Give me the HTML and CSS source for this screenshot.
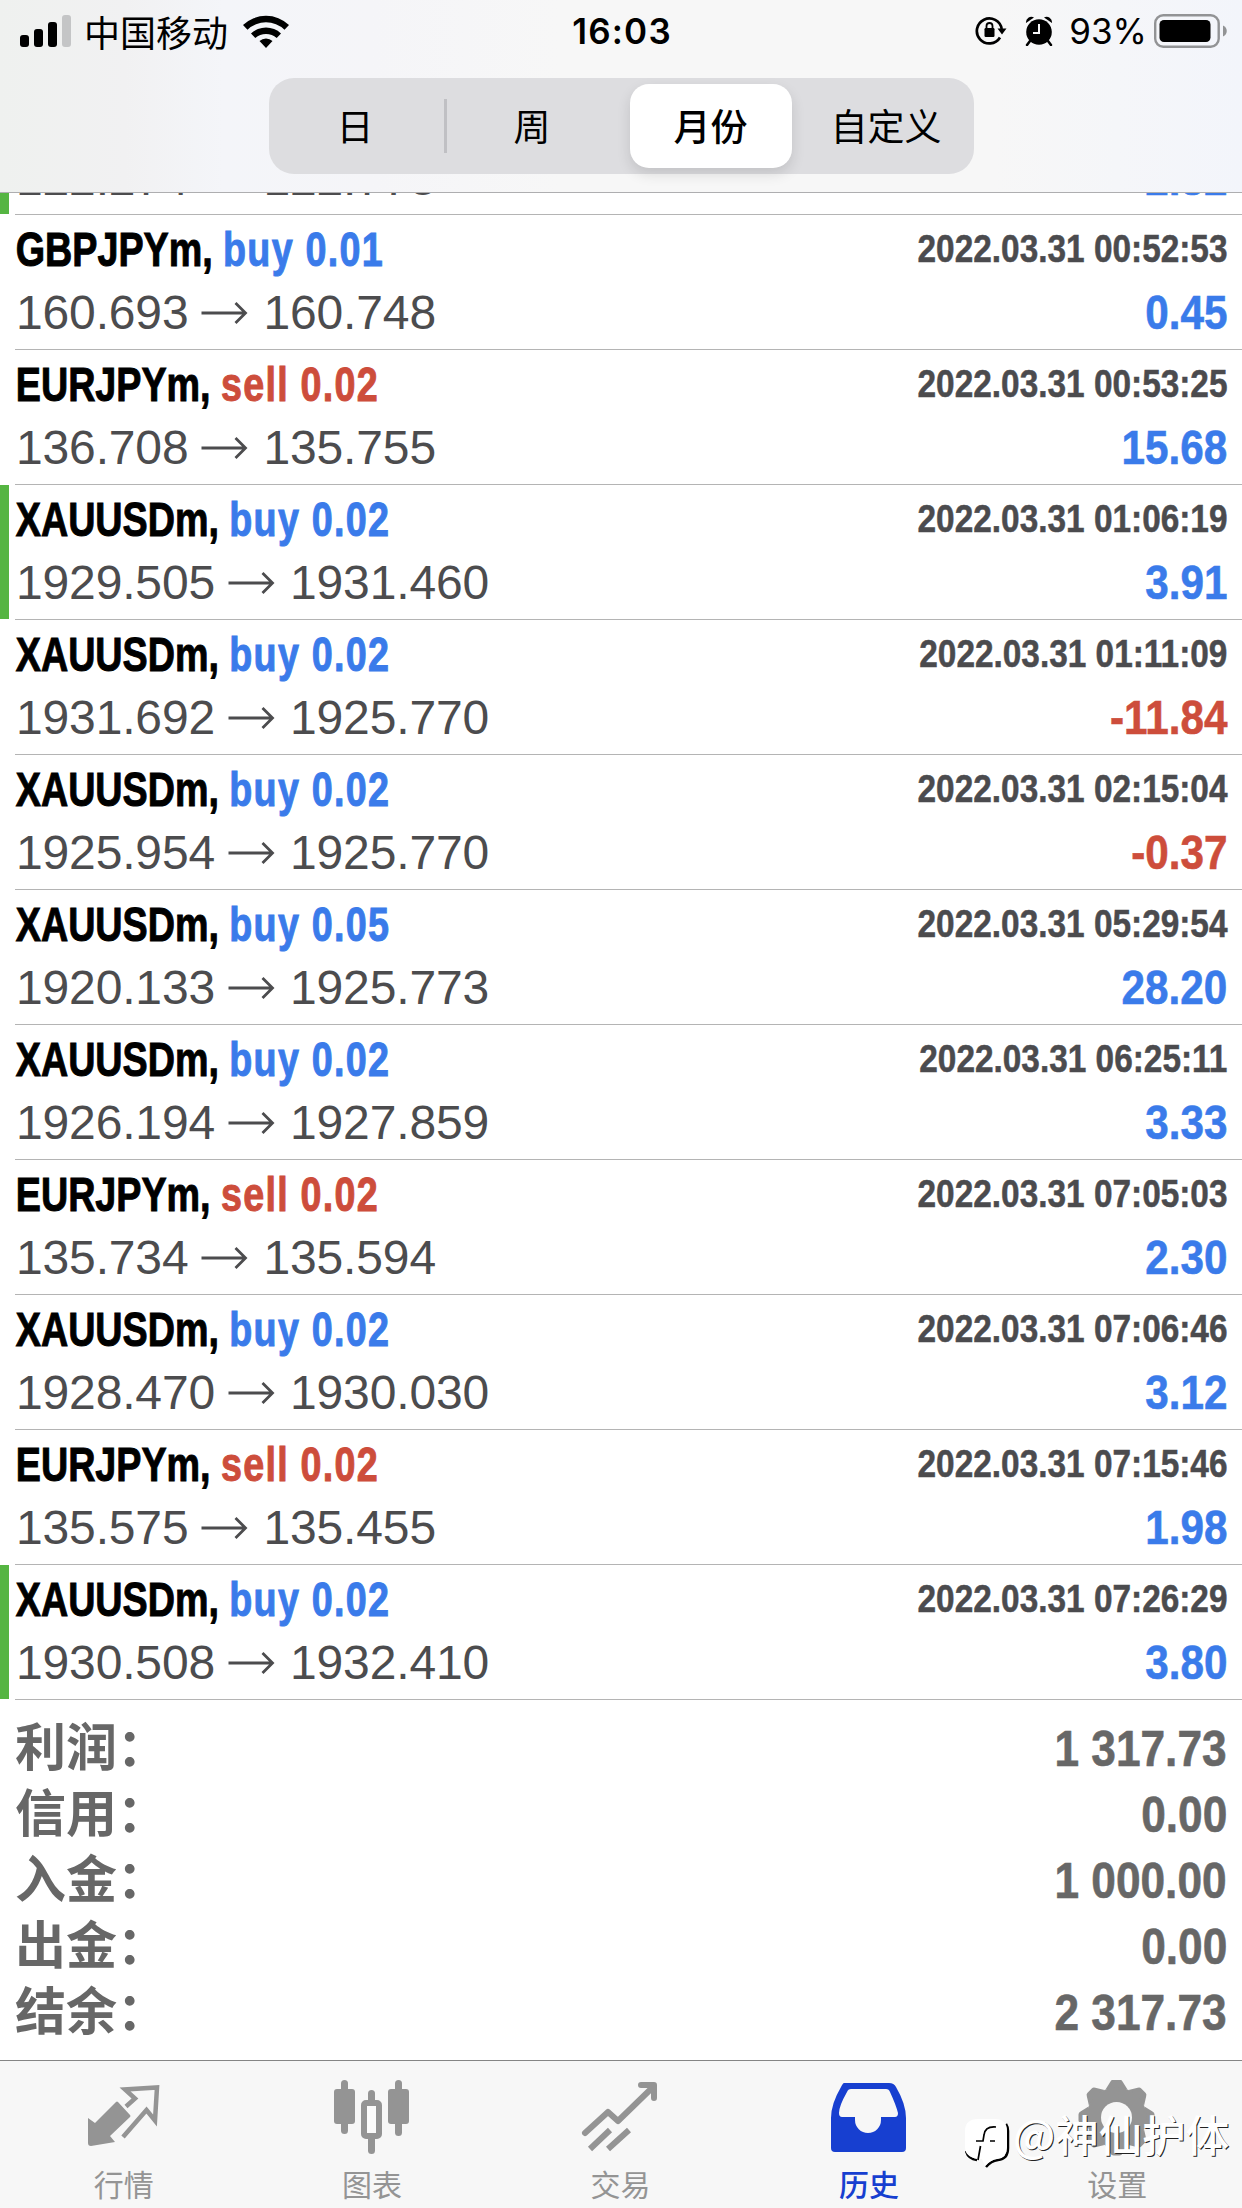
FILE: index.html
```
<!DOCTYPE html>
<html lang="zh-CN">
<head>
<meta charset="utf-8">
<title>历史</title>
<link rel="stylesheet" href="styles.css">
</head>
<body>
<div class="app">
  <header class="header">
    <div class="status">
      <div class="status-left">
        <svg class="signal" width="52" height="32" viewBox="0 0 52 32"><rect x="0" y="20" width="9" height="12" rx="3"/><rect x="14" y="14" width="9" height="18" rx="3"/><rect x="28" y="7" width="9" height="25" rx="3"/><rect x="42" y="0" width="9" height="32" rx="3" fill="#c4c5c6"/></svg>
        <span class="carrier">中国移动</span>
        <svg class="wifi" width="46" height="33" viewBox="0 0 46 33"><path d="M23 33l-6.500-7a9.500 9.500 0 0 1 13 0zM8 18.500a22 22 0 0 1 30 0l-4.300 4.500a16 16 0 0 0-21.400 0zM0 10a33.500 33.500 0 0 1 46 0l-4.500 4.700a27 27 0 0 0-37 0z"/></svg>
      </div>
      <div class="clock">16:03</div>
      <div class="status-right">
        <svg class="lock" width="32" height="30" viewBox="0 0 32 30"><path d="M25 21.500A12.500 12.500 0 1 1 26.700 13" fill="none" stroke="#000" stroke-width="2.700"/><path d="M22.500 12.500h9l-4.500 6z"/><rect x="9.500" y="12" width="10" height="9" rx="1.200"/><path d="M11.500 13v-3a3 3 0 0 1 6 0v3" fill="none" stroke="#000" stroke-width="1.800"/></svg>
        <svg class="alarm" width="28" height="30" viewBox="0 0 28 30"><circle cx="14" cy="16" r="12.800"/><path d="M1 7a5.500 5.500 0 0 1 8-5.500zM27 7a5.500 5.500 0 0 0-8-5.500z"/><path d="M5 25l-3 4M23 25l3 4" stroke="#000" stroke-width="2.500" stroke-linecap="round"/><path d="M14 8v9H8" fill="none" stroke="#f7f7f8" stroke-width="2"/></svg>
        <span class="percent">93%</span>
        <svg class="battery" width="73" height="34" viewBox="0 0 73 34"><rect x="1.200" y="1.200" width="63.500" height="31.600" rx="8" fill="none" stroke="#929395" stroke-width="2.400"/><rect x="5.500" y="6" width="51" height="22" rx="4.500"/><path d="M69 11.500c5 2 5 9 0 11z" fill="#929395"/></svg>
      </div>
    </div>
    <nav class="segments">
      <span class="segment">日</span>
      <span class="segment divided">周</span>
      <span class="segment selected">月份</span>
      <span class="segment">自定义</span>
    </nav>
  </header>

  <main class="history">
    <article class="deal marked clipped"><div class="line price"><span>122.274</span><svg class="arrow" viewBox="0 0 46 22"><path d="M0 11h44M34 1l10 10-10 10"/></svg><span>122.773</span><b class="profit">2.82</b></div></article>
    <article class="deal"><div class="line"><h2 class="title">GBPJPYm, <em class="buy">buy 0.01</em></h2><time>2022.03.31 00:52:53</time></div><div class="line price"><span>160.693</span><svg class="arrow" viewBox="0 0 46 22"><path d="M0 11h44M34 1l10 10-10 10"/></svg><span>160.748</span><b class="profit">0.45</b></div></article>
    <article class="deal"><div class="line"><h2 class="title">EURJPYm, <em class="sell">sell 0.02</em></h2><time>2022.03.31 00:53:25</time></div><div class="line price"><span>136.708</span><svg class="arrow" viewBox="0 0 46 22"><path d="M0 11h44M34 1l10 10-10 10"/></svg><span>135.755</span><b class="profit">15.68</b></div></article>
    <article class="deal marked"><div class="line"><h2 class="title">XAUUSDm, <em class="buy">buy 0.02</em></h2><time>2022.03.31 01:06:19</time></div><div class="line price"><span>1929.505</span><svg class="arrow" viewBox="0 0 46 22"><path d="M0 11h44M34 1l10 10-10 10"/></svg><span>1931.460</span><b class="profit">3.91</b></div></article>
    <article class="deal"><div class="line"><h2 class="title">XAUUSDm, <em class="buy">buy 0.02</em></h2><time>2022.03.31 01:11:09</time></div><div class="line price"><span>1931.692</span><svg class="arrow" viewBox="0 0 46 22"><path d="M0 11h44M34 1l10 10-10 10"/></svg><span>1925.770</span><b class="profit loss">-11.84</b></div></article>
    <article class="deal"><div class="line"><h2 class="title">XAUUSDm, <em class="buy">buy 0.02</em></h2><time>2022.03.31 02:15:04</time></div><div class="line price"><span>1925.954</span><svg class="arrow" viewBox="0 0 46 22"><path d="M0 11h44M34 1l10 10-10 10"/></svg><span>1925.770</span><b class="profit loss">-0.37</b></div></article>
    <article class="deal"><div class="line"><h2 class="title">XAUUSDm, <em class="buy">buy 0.05</em></h2><time>2022.03.31 05:29:54</time></div><div class="line price"><span>1920.133</span><svg class="arrow" viewBox="0 0 46 22"><path d="M0 11h44M34 1l10 10-10 10"/></svg><span>1925.773</span><b class="profit">28.20</b></div></article>
    <article class="deal"><div class="line"><h2 class="title">XAUUSDm, <em class="buy">buy 0.02</em></h2><time>2022.03.31 06:25:11</time></div><div class="line price"><span>1926.194</span><svg class="arrow" viewBox="0 0 46 22"><path d="M0 11h44M34 1l10 10-10 10"/></svg><span>1927.859</span><b class="profit">3.33</b></div></article>
    <article class="deal"><div class="line"><h2 class="title">EURJPYm, <em class="sell">sell 0.02</em></h2><time>2022.03.31 07:05:03</time></div><div class="line price"><span>135.734</span><svg class="arrow" viewBox="0 0 46 22"><path d="M0 11h44M34 1l10 10-10 10"/></svg><span>135.594</span><b class="profit">2.30</b></div></article>
    <article class="deal"><div class="line"><h2 class="title">XAUUSDm, <em class="buy">buy 0.02</em></h2><time>2022.03.31 07:06:46</time></div><div class="line price"><span>1928.470</span><svg class="arrow" viewBox="0 0 46 22"><path d="M0 11h44M34 1l10 10-10 10"/></svg><span>1930.030</span><b class="profit">3.12</b></div></article>
    <article class="deal"><div class="line"><h2 class="title">EURJPYm, <em class="sell">sell 0.02</em></h2><time>2022.03.31 07:15:46</time></div><div class="line price"><span>135.575</span><svg class="arrow" viewBox="0 0 46 22"><path d="M0 11h44M34 1l10 10-10 10"/></svg><span>135.455</span><b class="profit">1.98</b></div></article>
    <article class="deal marked"><div class="line"><h2 class="title">XAUUSDm, <em class="buy">buy 0.02</em></h2><time>2022.03.31 07:26:29</time></div><div class="line price"><span>1930.508</span><svg class="arrow" viewBox="0 0 46 22"><path d="M0 11h44M34 1l10 10-10 10"/></svg><span>1932.410</span><b class="profit">3.80</b></div></article>
    <dl class="summary">
      <div><dt>利润：</dt><dd>1 317.73</dd></div>
      <div><dt>信用：</dt><dd>0.00</dd></div>
      <div><dt>入金：</dt><dd>1 000.00</dd></div>
      <div><dt>出金：</dt><dd>0.00</dd></div>
      <div><dt>结余：</dt><dd>2 317.73</dd></div>
    </dl>
  </main>

  <footer class="tabs">
    <div class="tab"><svg width="80" height="80" viewBox="0 0 80 80"><path fill="currentColor" d="M4 20l7 5 21-21q1-1 2 0l12 13q1 1 0 2l-20 19 5 6-24 4q-3 0-3-3z" transform="translate(0 18)"/><path d="M42 26.500l9-8-10-9 32-2-2 33-8.500-10.500L39 57" fill="none" stroke="currentColor" stroke-width="4.500"/></svg><span>行情</span></div>
    <div class="tab"><svg width="80" height="80" viewBox="0 0 80 80"><g fill="currentColor"><rect x="9" y="0" width="7" height="54" rx="3.500"/><rect x="2" y="9" width="21" height="35" rx="3"/><rect x="63" y="0" width="7" height="56" rx="3.500"/><rect x="56" y="9" width="21" height="35" rx="3"/><rect x="36" y="10" width="7" height="15" rx="3.500"/><rect x="36" y="55" width="7" height="19" rx="3.500"/></g><rect x="32" y="23" width="15" height="33" rx="2" fill="#fbfbfb" stroke="currentColor" stroke-width="6"/></svg><span>图表</span></div>
    <div class="tab"><svg width="80" height="80" viewBox="0 0 80 80"><g fill="none" stroke="currentColor" stroke-width="6"><path d="M5 53l23-21 10 9L73 7M61 5h13v13" stroke-linecap="round" stroke-linejoin="round"/><path d="M10 69l20-19M28 69l21-19"/></g></svg><span>交易</span></div>
    <div class="tab active"><svg width="80" height="80" viewBox="0 0 80 80"><path fill="currentColor" fill-rule="evenodd" d="M15 3h45q5 0 7 4Q77 24 77 38v30q0 4-4 4H6q-4 0-4-4V38Q2 24 12 7q2-4 3-4zM22 9q-3 0-4 3-8 14-8 21 0 4 3 4h13v3a13 13 0 0 0 26 0v-3h14q3 0 3-4-2-8-8-21-1-3-4-3z"/></svg><span>历史</span></div>
    <div class="tab"><svg width="80" height="80" viewBox="0 0 80 80"><g fill="currentColor" transform="translate(39.500 37.500)"><path id="cog" d="M-11-28l5-8q1-2 3-2h6q2 0 3 2l5 8zM-11 28l5 8q1 2 3 2h6q2 0 3-2l5-8z"/><use href="#cog" transform="rotate(45)"/><use href="#cog" transform="rotate(90)"/><use href="#cog" transform="rotate(135)"/><circle r="30"/></g><circle cx="39.500" cy="37.500" r="15.500" fill="#f7f7f7"/></svg><span>设置</span></div>
  </footer>

  <div class="watermark">
    <svg width="46" height="52" viewBox="0 0 46 52">
      <path d="M41 5q2 3 2 7v17q0 11-10 12-7 1-12 7M1 32q2 8 11 9" fill="none" stroke="#000" stroke-width="2.500"/>
      <path d="M13 0h17q12 0 12 12v16q0 11-10 12-7 1-12 7l-3-7-4 0Q0 38 0 28V12Q0 0 13 0z" fill="#fff"/>
      <path d="M31 8q-11-1-12 8l-1 6h-7M25 22h5M15.500 27L13 41" fill="none" stroke="#000" stroke-width="1.700"/>
    </svg>
    <span>@神仙护体</span>
  </div>
</div>
</body>
</html>
```
FILE: styles.css
```
* { box-sizing: border-box; }
body { margin: 0; background: #fff; color: #000; font-family: "Liberation Sans", "Noto Sans CJK SC", sans-serif; }
.app { width: 1242px; height: 2208px; display: flex; flex-direction: column; position: relative; overflow: hidden; }
svg { display: block; flex: none; }

.header { height: 193px; flex: none; border-bottom: 1px solid #aeaeb0; background: linear-gradient(90deg, #eff1ef 0, #f1f1f2 10%, #f4f5f9 18%, #f5f5f8 30%, #f7f7f7 45%, #f7f7f7 80%, #f3f5fb 100%); display: flex; flex-direction: column; align-items: center; }
.status { width: 100%; height: 78px; padding: 0 15px 16px 20px; display: grid; grid-template-columns: 1fr auto 1fr; align-items: center; }
.status-left, .status-right { display: flex; align-items: center; }
.status-right { justify-content: flex-end; }
.carrier { font: 36px/40px "Noto Sans CJK SC", sans-serif; margin-left: 12px; }
.wifi { margin-left: 15px; }
.clock { font: 600 35px/40px Inter, sans-serif; letter-spacing: 1.200px; padding-right: 3px; }
.alarm { margin-left: 18px; }
.percent { font: 35px/40px Inter, sans-serif; margin: 0 7px 0 16px; }

.segments { width: 705px; height: 96px; padding: 6px 0; border-radius: 25px; background: #dddde0; display: grid; grid-template-columns: 173px 181px 176px 175px; }
.segment { display: flex; align-items: center; justify-content: center; font: 37px/82px "Noto Sans CJK SC", sans-serif; padding-bottom: 2px; }
.segment.divided { position: relative; }
.segment.divided::before { content: ""; position: absolute; left: 2px; top: 15px; width: 3px; height: 54px; background: #c0c0c4; }
.segment.selected { background: #fff; border-radius: 19px; font-weight: 500; width: 162px; justify-self: center; box-shadow: 0 6px 14px rgba(0,0,0,.12); }

.history { flex: 1; display: flex; flex-direction: column; }
.deal { height: 135px; flex: none; position: relative; padding: 3px 15px 0; }
.deal::after { content: ""; position: absolute; left: 15px; right: 0; bottom: 0; height: 1px; background: #b4b4b4; }
.deal.marked::before { content: ""; position: absolute; left: 0; top: 0; bottom: 1px; width: 9px; background: #55b542; }
.deal.clipped { height: 22px; overflow: hidden; display: flex; flex-direction: column; justify-content: flex-end; padding-bottom: 5px; }
.line { display: flex; align-items: center; height: 63px; flex: none; }
.title { margin: 0; padding-left: 1px; font-size: 48px; line-height: 63px; font-weight: 700; white-space: nowrap; transform: scaleX(.785); transform-origin: 0 50%; -webkit-text-stroke: 1px currentColor; }
.title em { font-style: normal; letter-spacing: 1.600px; }
.buy { color: #3a7bea; }
.sell { color: #cd4d3b; }
time { margin-left: auto; font-size: 38.500px; line-height: 61px; padding-bottom: 2px; font-weight: 700; color: #4b4b4e; white-space: nowrap; transform: scaleX(.867); transform-origin: 100% 50%; -webkit-text-stroke: .5px currentColor; }
.price { font-size: 48px; color: #4c4c4e; letter-spacing: -.15px; padding-left: 1px; }
.arrow { width: 47px; height: 22px; margin: 0 15px 0 13px; fill: none; stroke: #4c4c4e; stroke-width: 2.800px; }
.profit { margin-left: auto; color: #3a7bea; letter-spacing: 0; transform: scaleX(.88); transform-origin: 100% 50%; -webkit-text-stroke: .6px currentColor; }
.profit.loss { color: #cd4d3b; }

.summary { margin: 0; padding: 14px 15px 0; color: #676767; }
.summary div { display: flex; justify-content: space-between; align-items: center; height: 66px; }
.summary dt { font: 700 51px/60px "Noto Sans CJK SC", sans-serif; padding-bottom: 6px; }
.summary dd { margin: 0; padding-top: 3px; font-size: 50px; font-weight: 700; transform: scaleX(.885); transform-origin: 100% 50%; -webkit-text-stroke: .6px currentColor; }

.tabs { height: 148px; flex: none; border-top: 1px solid #858585; background: #f7f7f7; display: grid; grid-template-columns: repeat(5, 1fr); padding-top: 19px; }
.tab { display: flex; flex-direction: column; align-items: center; color: #949494; font: 30px/46px "Noto Sans CJK SC", sans-serif; padding-right: 1px; }
.tab.active { color: #173fd0; font-weight: 500; }

.watermark { position: absolute; left: 965px; top: 2106px; display: flex; align-items: flex-start; color: #fff; font: 500 43.500px/56px "Noto Sans CJK SC", sans-serif; text-shadow: 1px 1px 0 #222; }
.watermark svg { margin-top: 13px; }
.watermark span { margin-left: 2px; }
```
